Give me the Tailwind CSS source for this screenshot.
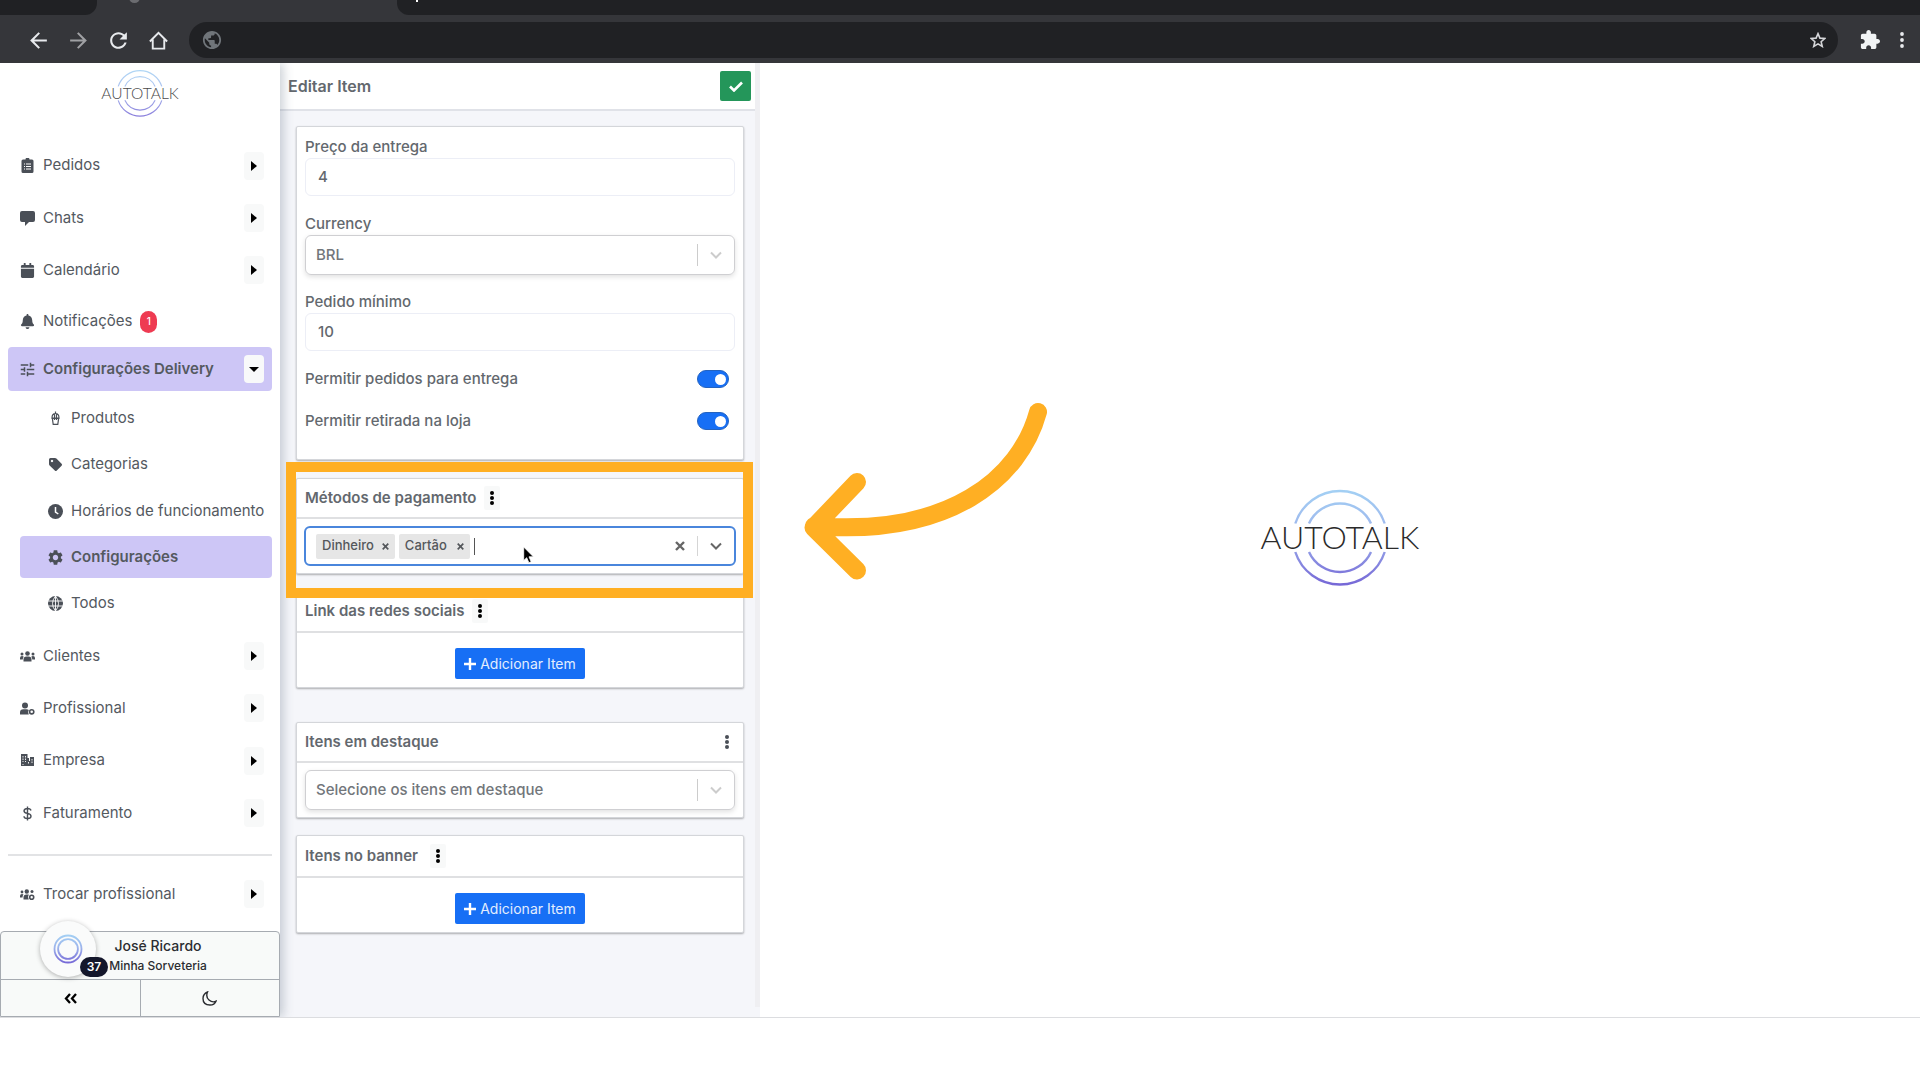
<!DOCTYPE html>
<html lang="pt-BR">
<head>
<meta charset="utf-8">
<meta name="viewport" content="width=device-width, initial-scale=1">
<title>Autotalk</title>
<script src="https://cdn.jsdelivr.net/npm/@tailwindcss/browser@4"></script>
</head>
<body class="min-h-screen bg-white font-['Inter',sans-serif] text-[15px] text-[#54595f]">

<!-- Shared symbols -->
<svg class="absolute size-0" aria-hidden="true">
  <defs>
    <linearGradient id="ring" gradientUnits="userSpaceOnUse" x1="0" y1="2" x2="0" y2="98">
      <stop offset="0" stop-color="#a3d0f4"/><stop offset=".45" stop-color="#9db4ec"/><stop offset="1" stop-color="#7566d6"/>
    </linearGradient>
  </defs>
  <symbol id="rings" viewBox="0 0 160 100">
    <path fill="none" stroke="url(#ring)" stroke-width="2.4" d="M35.3 35.5A47 47 0 0 1 124.7 35.5M49 35.5A34 34 0 0 1 111 35.5M35.3 64A47 47 0 0 0 124.7 64M49 64A34 34 0 0 0 111 64"/>
  </symbol>
  <symbol id="caret" viewBox="0 0 6 10"><path d="M0 0l6 5-6 5z"/></symbol>
  <symbol id="dots" viewBox="0 0 4 14"><circle cx="2" cy="2" r="2"/><circle cx="2" cy="7" r="2"/><circle cx="2" cy="12" r="2"/></symbol>
  <symbol id="chev" viewBox="0 0 12 8"><path d="M1 1.5l5 5 5-5" fill="none" stroke="currentColor" stroke-width="2"/></symbol>
  <symbol id="cross" viewBox="0 0 10 10"><path d="M1 1l8 8M9 1l-8 8" fill="none" stroke="currentColor" stroke-width="2.4"/></symbol>
  <symbol id="plus" viewBox="0 0 12 12"><path d="M6 0v12M0 6h12" fill="none" stroke="currentColor" stroke-width="2.4"/></symbol>
  <symbol id="person3" viewBox="0 0 30 22">
    <circle cx="15" cy="5" r="4.6"/><path d="M7 21v-4q0-6 6-6h4q6 0 6 6v4z"/>
    <circle cx="4" cy="6" r="3"/><path d="M0 17v-3q0-4 4-4 2 0 3.500 1.500Q5.500 13.500 5.500 17z"/>
    <circle cx="26" cy="6" r="3"/><path d="M30 17v-3q0-4-4-4-2 0-3.500 1.500Q24.500 13.500 24.500 17z"/>
  </symbol>
  <symbol id="gear" viewBox="2 2 20 20"><path d="M19.140 12.940c.04-.3.060-.61.060-.94 0-.32-.02-.64-.07-.94l2.030-1.580c.18-.14.23-.41.12-.61l-1.920-3.320c-.12-.22-.37-.29-.59-.22l-2.390.96c-.5-.38-1.030-.7-1.620-.94l-.36-2.540c-.04-.24-.24-.41-.48-.41h-3.840c-.24 0-.43.17-.47.41l-.36 2.540c-.59.24-1.130.57-1.620.94l-2.390-.96c-.22-.08-.47 0-.59.22L2.740 8.870c-.12.21-.08.47.12.61l2.030 1.580c-.05.3-.09.63-.09.94s.02.64.07.94l-2.030 1.580c-.18.14-.23.41-.12.61l1.920 3.320c.12.22.37.29.59.22l2.390-.96c.5.38 1.030.7 1.620.94l.36 2.540c.05.24.24.41.48.41h3.840c.24 0 .44-.17.47-.41l.36-2.540c.59-.24 1.130-.56 1.620-.94l2.390.96c.22.080.47 0 .59-.22l1.920-3.320c.12-.22.07-.47-.12-.61l-2.010-1.580zM12 15.600c-1.980 0-3.600-1.620-3.600-3.600s1.620-3.600 3.600-3.600 3.600 1.620 3.600 3.600-1.620 3.600-3.600 3.600z"/></symbol>
</svg>

<!-- Browser chrome -->
<header class="bg-[#35363a]">
  <div class="flex h-[15px] overflow-hidden bg-[#35363a]">
    <div class="w-[97px] rounded-br-xl bg-[#202124]"></div>
    <div class="flex w-[300px] items-start pl-8"><span class="-mt-2 size-[11px] rounded-full bg-[#6b6c70]"></span></div>
    <div class="flex flex-1 rounded-bl-xl bg-[#202124] pl-[19px]"><span class="h-[2px] w-[2px] bg-white"></span></div>
  </div>
  <div class="flex h-12 items-center pt-0.5 pr-4 pl-[27px]">
    <div class="flex gap-[17px] text-[#e8eaed]">
      <button aria-label="Voltar"><svg class="size-[23px]" viewBox="1 1 22 22" fill="currentColor"><path d="M20 11H7.830l5.590-5.590L12 4l-8 8 8 8 1.410-1.410L7.830 13H20v-2z"/></svg></button>
      <button aria-label="Avançar"><svg class="size-[23px] text-[#a0a1a4]" viewBox="1 1 22 22" fill="currentColor"><path d="M12 4l-1.410 1.410L16.170 11H4v2h12.170l-5.580 5.590L12 20l8-8z"/></svg></button>
      <button aria-label="Recarregar"><svg class="size-[23px]" viewBox="1 1 22 22" fill="currentColor"><path d="M17.650 6.350C16.200 4.900 14.210 4 12 4c-4.420 0-7.990 3.580-7.990 8s3.570 8 7.990 8c3.730 0 6.840-2.550 7.730-6h-2.080c-.82 2.330-3.040 4-5.650 4-3.310 0-6-2.690-6-6s2.690-6 6-6c1.660 0 3.140.69 4.220 1.780L13 11h7V4l-2.350 2.350z"/></svg></button>
      <button aria-label="Início"><svg class="size-[23px]" viewBox="0 0 24 24" fill="none" stroke="currentColor" stroke-width="2"><path d="M3 13L12 4l9 9M6 11v9.500h12V11"/></svg></button>
    </div>
    <div class="mr-[22px] ml-[19px] flex h-9 flex-1 items-center justify-between rounded-full bg-[#202124] pr-3 pl-[13px]">
      <svg class="size-5 text-[#70757a]" viewBox="1 1 22 22" fill="currentColor"><path d="M12 2C6.480 2 2 6.480 2 12s4.480 10 10 10 10-4.480 10-10S17.520 2 12 2zm-1 17.930c-3.950-.49-7-3.850-7-7.930 0-.62.080-1.210.21-1.790L9 15v1c0 1.100.9 2 2 2v1.930zm6.900-2.540c-.26-.81-1-1.390-1.900-1.390h-1v-3c0-.55-.45-1-1-1H8v-2h2c.55 0 1-.45 1-1V7h2c1.100 0 2-.9 2-2v-.41c2.930 1.190 5 4.060 5 7.410 0 2.080-.8 3.970-2.100 5.390z"/></svg>
      <button aria-label="Favoritar"><svg class="size-4 text-[#d5d6d9]" viewBox="0 0 24 24" fill="none" stroke="currentColor" stroke-width="2.400"><path d="M12 2.500l2.900 6.700 7.300.6-5.500 4.800 1.700 7.100L12 17.900l-6.400 3.800 1.700-7.100-5.500-4.800 7.300-.6z"/></svg></button>
    </div>
    <button aria-label="Extensões"><svg class="size-[20px] text-[#f1f3f4]" viewBox="1 1 22 22" fill="currentColor"><path d="M20.500 11H19V7c0-1.100-.9-2-2-2h-4V3.500C13 2.120 11.880 1 10.500 1S8 2.120 8 3.500V5H4c-1.100 0-1.990.9-1.990 2v3.800H3.500c1.490 0 2.700 1.210 2.700 2.700s-1.210 2.700-2.700 2.700H2V20c0 1.100.9 2 2 2h3.800v-1.500c0-1.490 1.210-2.700 2.700-2.700 1.490 0 2.700 1.210 2.700 2.700V22H17c1.100 0 2-.9 2-2v-4h1.500c1.380 0 2.500-1.120 2.500-2.500S21.880 11 20.500 11z"/></svg></button>
    <button aria-label="Menu" class="ml-5"><svg class="h-4 w-1 text-[#e8eaed]" viewBox="0 0 4 16" fill="currentColor"><circle cx="2" cy="2" r="1.900"/><circle cx="2" cy="8" r="1.900"/><circle cx="2" cy="14" r="1.900"/></svg></button>
  </div>
</header>

<div class="relative flex overflow-hidden border-b border-[#dcdde0]">

  <!-- Sidebar -->
  <aside class="relative z-10 flex w-70 shrink-0 flex-col bg-white shadow-[3px_0_10px_rgba(60,80,100,0.28)]">
    <div class="flex justify-center pt-1.5"><svg class="h-[49px] w-[78px] opacity-85" viewBox="0 0 160 100" role="img" aria-label="Autotalk"><use href="#rings"/><text x="80" y="61" text-anchor="middle" font-family="Lato, sans-serif" font-weight="300" font-size="32" fill="#2b2b2b">AUTOTALK</text></svg></div>

    <nav class="mt-[21px] flex flex-col px-2">
      <div class="flex h-[53px] items-center justify-between pr-2 pl-3">
        <a href="#" class="flex items-center gap-2"><svg class="size-[15px]" viewBox="0 0 15 15"><path fill="#4a4f57" d="M3 1.500h2.500a2 2 0 0 1 4 0H12q1.500 0 1.500 1.500v10.500q0 1.500-1.500 1.500H3q-1.500 0-1.500-1.500V3Q1.500 1.500 3 1.500z"/><path d="M4 6h1M4 8.500h1M4 11h1M6 6h5M6 8.500h5M6 11h5" stroke="#fff" stroke-width="1"/></svg>Pedidos</a>
        <button aria-label="Abrir Pedidos" class="flex h-7 w-5 items-center justify-center rounded bg-[#f8f9f9] text-black"><svg class="h-2.5 w-1.5" fill="currentColor"><use href="#caret"/></svg></button>
      </div>
      <div class="flex h-[52px] items-center justify-between pr-2 pl-3">
        <a href="#" class="flex items-center gap-2"><svg class="size-[15px]" viewBox="0 0 15 15" fill="#4a4f57"><path d="M2 0h11q2 0 2 2v7q0 2-2 2H9l-4 4v-4H2q-2 0-2-2V2Q0 0 2 0z"/></svg>Chats</a>
        <button aria-label="Abrir Chats" class="flex h-7 w-5 items-center justify-center rounded bg-[#f8f9f9] text-black"><svg class="h-2.5 w-1.5" fill="currentColor"><use href="#caret"/></svg></button>
      </div>
      <div class="flex h-[52px] items-center justify-between pr-2 pl-3">
        <a href="#" class="flex items-center gap-2"><svg class="size-[15px]" viewBox="-32 0 512 512" fill="#4a4f57"><path d="M0 192h448v272c0 26-21 48-48 48H48c-26 0-48-21-48-48zM448 160v-48c0-26-21-48-48-48h-48V12q0-12-12-12h-40q-12 0-12 12v52H160V12q0-12-12-12h-40q-12 0-12 12v52H48C21 64 0 85 0 112v48z"/></svg>Calendário</a>
        <button aria-label="Abrir Calendário" class="flex h-7 w-5 items-center justify-center rounded bg-[#f8f9f9] text-black"><svg class="h-2.5 w-1.5" fill="currentColor"><use href="#caret"/></svg></button>
      </div>
      <a href="#" class="flex h-[51px] items-center gap-2 pl-3"><svg class="size-[15px]" viewBox="-32 0 512 512" fill="#4a4f57"><path d="M224 512c35 0 64-28 64-64H160c0 36 29 64 64 64zm215-150c-19-20-55-52-55-154 0-78-54-140-128-155V32c0-18-14-32-32-32s-32 14-32 32v21C118 68 64 130 64 208c0 102-36 134-55 154-6 7-9 14-9 22 0 16 13 32 32 32h384c19 0 32-16 32-32 0-8-3-15-9-22z"/></svg>Notificações<span class="flex h-[22px] w-[17px] items-center justify-center rounded-full bg-[#ee3b52] text-[10px] font-medium text-white">1</span></a>

      <div class="flex h-11 items-center justify-between rounded bg-[#cdc6f6] pr-2 pl-3">
        <a href="#" class="flex items-center gap-2 font-semibold"><svg class="size-[15px]" viewBox="2 2 20 20" fill="#4a4f57"><path d="M3 17v2h6v-2H3zM3 5v2h10V5H3zm10 16v-2h8v-2h-8v-2h-2v6h2zM7 9v2H3v2h4v2h2V9H7zm14 4v-2H11v2h10zm-6-4h2V7h4V5h-4V3h-2v6z"/></svg>Configurações Delivery</a>
        <button aria-label="Fechar Configurações Delivery" class="flex h-7 w-5 items-center justify-center rounded bg-[#f8f9fa] text-black"><svg class="h-[5px] w-2.5" viewBox="0 0 10 5" fill="currentColor"><path d="M0 0h10L5 5z"/></svg></button>
      </div>

      <div class="mt-1 ml-3 flex flex-col">
        <a href="#" class="flex h-[46px] items-center gap-2 pl-7"><svg class="size-[15px]" viewBox="0 0 15 15" fill="none" stroke="#4a4f57" stroke-width="1.200"><path d="M4 7q0-4.500 3.500-4.500T11 7zM4.300 7l.9 6.300h4.600L10.700 7M3.500 7.500h8M6.500 3v6M8.500 3v6M7.500 .5v2"/></svg>Produtos</a>
        <a href="#" class="flex h-[47px] items-center gap-2 pl-7"><svg class="size-[15px]" viewBox="0 0 15 15" fill="#4a4f57"><path fill-rule="evenodd" d="M1 2.500Q1 1 2.500 1H7q.8 0 1.400.6l5.200 5.200q1 1 0 2l-4.800 4.800q-1 1-2 0L1.600 8.400Q1 7.800 1 7zM4 2.800a1.200 1.200 0 1 0 .01 0z"/></svg>Categorias</a>
        <a href="#" class="flex h-[46px] items-center gap-2 pl-7"><svg class="size-[15px]" viewBox="0 0 15 15"><circle cx="7.500" cy="7.500" r="7.500" fill="#4a4f57"/><path d="M7.500 3v5l2.800 2" fill="none" stroke="#fff" stroke-width="1.500"/></svg>Horários de funcionamento</a>
        <a href="#" class="my-0.5 flex h-[42px] items-center gap-2 rounded bg-[#cdc6f6] pl-7 font-semibold"><svg class="size-[15px]" fill="#4a4f57"><use href="#gear"/></svg>Configurações</a>
        <a href="#" class="flex h-[46px] items-center gap-2 pl-7"><svg class="size-[15px]" viewBox="0 0 15 15"><circle cx="7.500" cy="7.500" r="7.500" fill="#4a4f57"/><path d="M0 5h15M0 10h15M7.500 0v15M7.500 0Q1.500 7.500 7.500 15M7.500 0q6 7.500 0 15" fill="none" stroke="#fff" stroke-width=".9"/></svg>Todos</a>
      </div>

      <div class="mt-1 flex h-[52px] items-center justify-between pr-2 pl-3">
        <a href="#" class="flex items-center gap-2"><svg class="size-[15px]" fill="#4a4f57"><use href="#person3"/></svg>Clientes</a>
        <button aria-label="Abrir Clientes" class="flex h-7 w-5 items-center justify-center rounded bg-[#f8f9f9] text-black"><svg class="h-2.5 w-1.5" fill="currentColor"><use href="#caret"/></svg></button>
      </div>
      <div class="flex h-[52px] items-center justify-between pr-2 pl-3">
        <a href="#" class="flex items-center gap-2"><svg class="size-[15px]" viewBox="0 0 15 15" fill="#4a4f57"><circle cx="5" cy="4.500" r="3"/><path d="M0 13.500v-2q0-3.300 3.500-3.300h3q1.500 0 2.300.8-1.600 2 0 4.500z"/><circle cx="11.700" cy="10.800" r="2.100" fill="none" stroke="#4a4f57" stroke-width="1.600"/></svg>Profissional</a>
        <button aria-label="Abrir Profissional" class="flex h-7 w-5 items-center justify-center rounded bg-[#f8f9f9] text-black"><svg class="h-2.5 w-1.5" fill="currentColor"><use href="#caret"/></svg></button>
      </div>
      <div class="flex h-[53px] items-center justify-between pr-2 pl-3">
        <a href="#" class="flex items-center gap-2"><svg class="size-[15px]" viewBox="0 0 15 15"><path fill="#4a4f57" d="M1 1h6.500v4H9v3h1V4h4v9H1z"/><path d="M3 3v6M5.500 3v6M3 11v1M12 6v4M8.500 9v1.500" stroke="#fff" stroke-width=".9" stroke-dasharray="1.500 1"/></svg>Empresa</a>
        <button aria-label="Abrir Empresa" class="flex h-7 w-5 items-center justify-center rounded bg-[#f8f9f9] text-black"><svg class="h-2.5 w-1.5" fill="currentColor"><use href="#caret"/></svg></button>
      </div>
      <div class="flex h-[52px] items-center justify-between pr-2 pl-3">
        <a href="#" class="flex items-center gap-2"><svg class="size-[15px]" viewBox="0 0 15 15" fill="none" stroke="#4a4f57" stroke-width="1.400"><path d="M11 4.500Q10.500 2.500 7.500 2.500T4 4.800Q4 7 7.500 7.400 11 8 11 10.200 11 12.500 7.500 12.500T4 10.300M7.500.5v14"/></svg>Faturamento</a>
        <button aria-label="Abrir Faturamento" class="flex h-7 w-5 items-center justify-center rounded bg-[#f8f9f9] text-black"><svg class="h-2.5 w-1.5" fill="currentColor"><use href="#caret"/></svg></button>
      </div>
      <hr class="mt-[15px] mb-3 border-t-2 border-[#e2e3e5]">
      <div class="flex h-[52px] items-center justify-between pr-2 pl-3">
        <a href="#" class="flex items-center gap-2"><svg class="size-[15px]" viewBox="0 0 15 15" fill="#4a4f57"><circle cx="6.800" cy="4.500" r="2.200"/><circle cx="2" cy="5" r="1.400"/><circle cx="12" cy="4.500" r="1.500"/><path d="M3.500 12.500v-2q0-3 3-3h2.300q-1.600 2.500 0 5zM0 10.500V9q0-2 2-2 1 0 1.500.5-1 1-1 3z"/><circle cx="11.700" cy="10.300" r="2" fill="none" stroke="#4a4f57" stroke-width="1.600"/></svg>Trocar profissional</a>
        <button aria-label="Abrir Trocar profissional" class="flex h-7 w-5 items-center justify-center rounded bg-[#f8f9f9] text-black"><svg class="h-2.5 w-1.5" fill="currentColor"><use href="#caret"/></svg></button>
      </div>
    </nav>

    <div class="relative mt-auto rounded-t border border-[#a6abb1] bg-[#f8faf9] text-[#2b2d31]">
      <div class="flex h-[47px] flex-col items-center justify-center pl-9">
        <span class="text-sm leading-5 font-medium">José Ricardo</span>
        <span class="text-xs leading-5 font-medium">Minha Sorveteria</span>
      </div>
      <div class="flex h-[37px] border-t border-[#a6abb1]">
        <button aria-label="Recolher menu" class="flex flex-1 items-center justify-center border-r border-[#a6abb1] text-black"><svg class="h-[11px] w-[13px]" viewBox="0 0 13 11" fill="none" stroke="currentColor" stroke-width="2.300"><path d="M6 1L2 5.500 6 10M12 1L8 5.500l4 4.500"/></svg></button>
        <button aria-label="Modo escuro" class="flex flex-1 items-center justify-center"><svg class="size-[15px]" viewBox="0 0 15 15" fill="none" stroke="currentColor" stroke-width="1.400"><path d="M5.500 1Q3.500 6 7 9t7 1.200Q12.500 14 8 14 1 14 1 7.500 1 3 5.500 1z"/></svg></button>
      </div>
      <div class="absolute -top-[11px] left-[39px] flex size-14 items-center justify-center rounded-full bg-[#fafbfb] shadow-[0_1px_5px_rgba(0,0,0,0.3)]">
        <svg class="size-[30px]" viewBox="30 0 100 100" fill="none" stroke="url(#ring)" stroke-width="6"><circle cx="80" cy="50" r="45"/><circle cx="80" cy="50" r="33"/></svg>
        <span class="absolute right-[-12px] bottom-0 flex h-5 w-7 items-center justify-center rounded-full bg-[#14172b] text-xs font-semibold text-white">37</span>
      </div>
    </div>
  </aside>

  <!-- Edit panel -->
  <section class="flex w-120 shrink-0 bg-[#f5f6fa]">
    <form class="flex-1 font-medium text-[#63686e]">
      <div class="flex h-12 items-center justify-between border-b-2 border-[#e0e2e8] bg-white pr-1 pl-2">
        <h1 class="text-base font-semibold">Editar Item</h1>
        <button type="button" aria-label="Salvar" class="flex h-[30px] w-[31px] items-center justify-center rounded-xs bg-[#24965a] text-white"><svg class="h-[11px] w-3.5" viewBox="0 0 14 11" fill="none" stroke="currentColor" stroke-width="2.600"><path d="M1 5.500l4 4L13 1.500"/></svg></button>
      </div>

      <div class="mt-[15px] ml-4 w-[448px] rounded-xs border border-[#d4d6da] bg-white px-2 pt-2 pb-[15px] shadow-[0_1px_2px_rgba(0,0,0,0.3)]">
        <label for="preco" class="block h-[23px] leading-6">Preço da entrega</label>
        <input id="preco" value="4" class="block h-[38px] w-full rounded-md border border-[#eceef6] px-3 pb-0.5">
        <label for="moeda" class="mt-4 block h-[23px] leading-6">Currency</label>
        <div class="flex h-10 items-center rounded-md border border-[#cfcfd2] shadow-[0_2px_5px_rgba(0,0,0,0.12)]">
          <select id="moeda" class="h-full flex-1 appearance-none px-2.5 text-[#72767b]"><option>BRL</option></select>
          <span class="h-[22px] w-px bg-[#ccc]"></span>
          <svg class="mx-3 h-2 w-3 text-[#ccc]"><use href="#chev"/></svg>
        </div>
        <label for="minimo" class="mt-[15px] block h-[23px] leading-6">Pedido mínimo</label>
        <input id="minimo" value="10" class="block h-[38px] w-full rounded-md border border-[#eceef6] px-3 pb-0.5">
        <div class="mt-[17px] flex h-[22px] items-center justify-between pr-1.5">
          <label for="entrega">Permitir pedidos para entrega</label>
          <span class="grid items-center"><input id="entrega" type="checkbox" checked class="col-start-1 row-start-1 h-[18px] w-8 appearance-none rounded-full border border-[#2463c0] bg-[#176ff5]"><span class="pointer-events-none col-start-1 row-start-1 mr-[3px] size-[11px] justify-self-end rounded-full bg-white"></span></span>
        </div>
        <div class="mt-5 mb-3 flex h-[22px] items-center justify-between pr-1.5">
          <label for="retirada">Permitir retirada na loja</label>
          <span class="grid items-center"><input id="retirada" type="checkbox" checked class="col-start-1 row-start-1 h-[18px] w-8 appearance-none rounded-full border border-[#2463c0] bg-[#176ff5]"><span class="pointer-events-none col-start-1 row-start-1 mr-[3px] size-[11px] justify-self-end rounded-full bg-white"></span></span>
        </div>
      </div>

      <div class="mt-[18px] ml-4 w-[448px] rounded-xs border border-[#d4d6da] bg-white shadow-[0_1px_2px_rgba(0,0,0,0.3)]">
        <div class="flex h-10 items-center gap-2 border-b-2 border-[#dfe0e2] px-2 font-semibold"><label for="metodos">Métodos de pagamento</label>
          <button type="button" aria-label="Opções" class="flex h-6 w-4 items-center justify-center rounded-xs bg-[#f8f9f9] text-black"><svg class="h-3.5 w-1" fill="currentColor"><use href="#dots"/></svg></button></div>
        <div class="px-[7px] py-[7px]">
          <div class="flex h-10 items-center gap-1 rounded-md border-2 border-[#4a86dc] pl-2.5">
            <span class="flex h-[25px] items-center gap-2 rounded-xs bg-[#e6e6e6] px-1.5 text-[13px] text-[#54575b]">Dinheiro<button type="button" aria-label="Remover Dinheiro"><svg class="size-[7px]"><use href="#cross"/></svg></button></span>
            <span class="flex h-[25px] items-center gap-2.5 rounded-xs bg-[#e6e6e6] px-1.5 text-[13px] text-[#54575b]">Cartão<button type="button" aria-label="Remover Cartão"><svg class="size-[7px]"><use href="#cross"/></svg></button></span>
            <span class="h-[17px] w-px bg-[#555]"></span>
            <input id="metodos" class="h-full min-w-0 flex-1 outline-none">
            <button type="button" aria-label="Limpar" class="mr-2"><svg class="size-2.5 text-[#666]"><use href="#cross"/></svg></button>
            <span class="h-5 w-px bg-[#d5d5d5]"></span>
            <button type="button" aria-label="Abrir opções" class="mr-3 ml-2"><svg class="h-2 w-3 text-[#666]"><use href="#chev"/></svg></button>
          </div>
        </div>
      </div>

      <div class="mt-4 ml-4 w-[448px] rounded-xs border border-[#d4d6da] bg-white shadow-[0_1px_2px_rgba(0,0,0,0.3)]">
        <div class="flex h-[42px] items-center gap-2 border-b-2 border-[#dfe0e2] px-2 font-semibold"><h2>Link das redes sociais</h2>
          <button type="button" aria-label="Opções" class="flex h-6 w-4 items-center justify-center rounded-xs bg-[#f8f9f9] text-black"><svg class="h-3.5 w-1" fill="currentColor"><use href="#dots"/></svg></button></div>
        <div class="flex justify-center pt-[15px] pb-2"><button type="button" class="flex h-[31px] w-[130px] items-center justify-center gap-1 rounded-xs bg-[#176ff5] text-sm font-normal text-[#e2edfe]"><svg class="size-3 text-white"><use href="#plus"/></svg>Adicionar Item</button></div>
      </div>

      <div class="mt-[34px] ml-4 w-[448px] rounded-xs border border-[#d4d6da] bg-white shadow-[0_1px_2px_rgba(0,0,0,0.3)]">
        <div class="flex h-10 items-center justify-between border-b-2 border-[#dfe0e2] pr-[14px] pl-2 font-semibold"><label for="destaque">Itens em destaque</label>
          <button type="button" aria-label="Opções"><svg class="h-3.5 w-1 text-[#4a4f57]" fill="currentColor"><use href="#dots"/></svg></button></div>
        <div class="px-2 py-[7px]">
          <div class="flex h-10 items-center rounded-md border border-[#cfcfd2] shadow-[0_2px_5px_rgba(0,0,0,0.12)]">
            <select id="destaque" class="h-full flex-1 appearance-none px-2.5 text-[#72767b]"><option>Selecione os itens em destaque</option></select>
            <span class="h-[22px] w-px bg-[#ccc]"></span>
            <svg class="mx-3 h-2 w-3 text-[#ccc]"><use href="#chev"/></svg>
          </div>
        </div>
      </div>

      <div class="mt-[17px] mb-[84px] ml-4 w-[448px] rounded-xs border border-[#d4d6da] bg-white shadow-[0_1px_2px_rgba(0,0,0,0.3)]">
        <div class="flex h-[42px] items-center gap-2 border-b-2 border-[#dfe0e2] px-2 font-semibold"><h2>Itens no banner</h2>
          <button type="button" aria-label="Opções" class="ml-1 flex h-6 w-4 items-center justify-center rounded-xs bg-[#f8f9f9] text-black"><svg class="h-3.5 w-1" fill="currentColor"><use href="#dots"/></svg></button></div>
        <div class="flex justify-center pt-[15px] pb-2"><button type="button" class="flex h-[31px] w-[130px] items-center justify-center gap-1 rounded-xs bg-[#176ff5] text-sm font-normal text-[#e2edfe]"><svg class="size-3 text-white"><use href="#plus"/></svg>Adicionar Item</button></div>
      </div>
    </form>
    <div class="mb-2.5 w-[5px] bg-[#efeff2]"></div>
  </section>

  <!-- Empty content area -->
  <main class="flex flex-1 items-center justify-center bg-white pb-1">
    <svg class="h-[100px] w-[168px]" viewBox="-4 0 168 100" role="img" aria-label="Autotalk"><use href="#rings" width="160" height="100"/><text x="80" y="61" text-anchor="middle" font-family="Lato, sans-serif" font-weight="300" font-size="32" fill="#2b2b2b">AUTOTALK</text></svg>
  </main>

  <!-- Tutorial annotations -->
  <div class="pointer-events-none absolute top-[399px] left-[286px] z-20 h-[136px] w-[467px] border-10 border-[#ffaf23]"></div>
  <svg class="pointer-events-none absolute top-[317px] left-[780px] z-20 h-[220px] w-[290px]" viewBox="0 0 290 220" fill="none" stroke="#ffaf23" stroke-width="18" stroke-linecap="round" stroke-linejoin="round"><path d="M258 32C240 98 170 157 34 146M77 102L33.500 147.500 77 190.500"/></svg>
  <svg class="pointer-events-none absolute top-[483px] left-[523px] z-20 h-[18px] w-3" viewBox="0 0 12 18"><path d="M.7 1v13.500l3-2.800 2.200 5 2.300-1-2.200-4.900h4.400z" fill="#000" stroke="#fff" stroke-width=".8"/></svg>
</div>
</body>
</html>
